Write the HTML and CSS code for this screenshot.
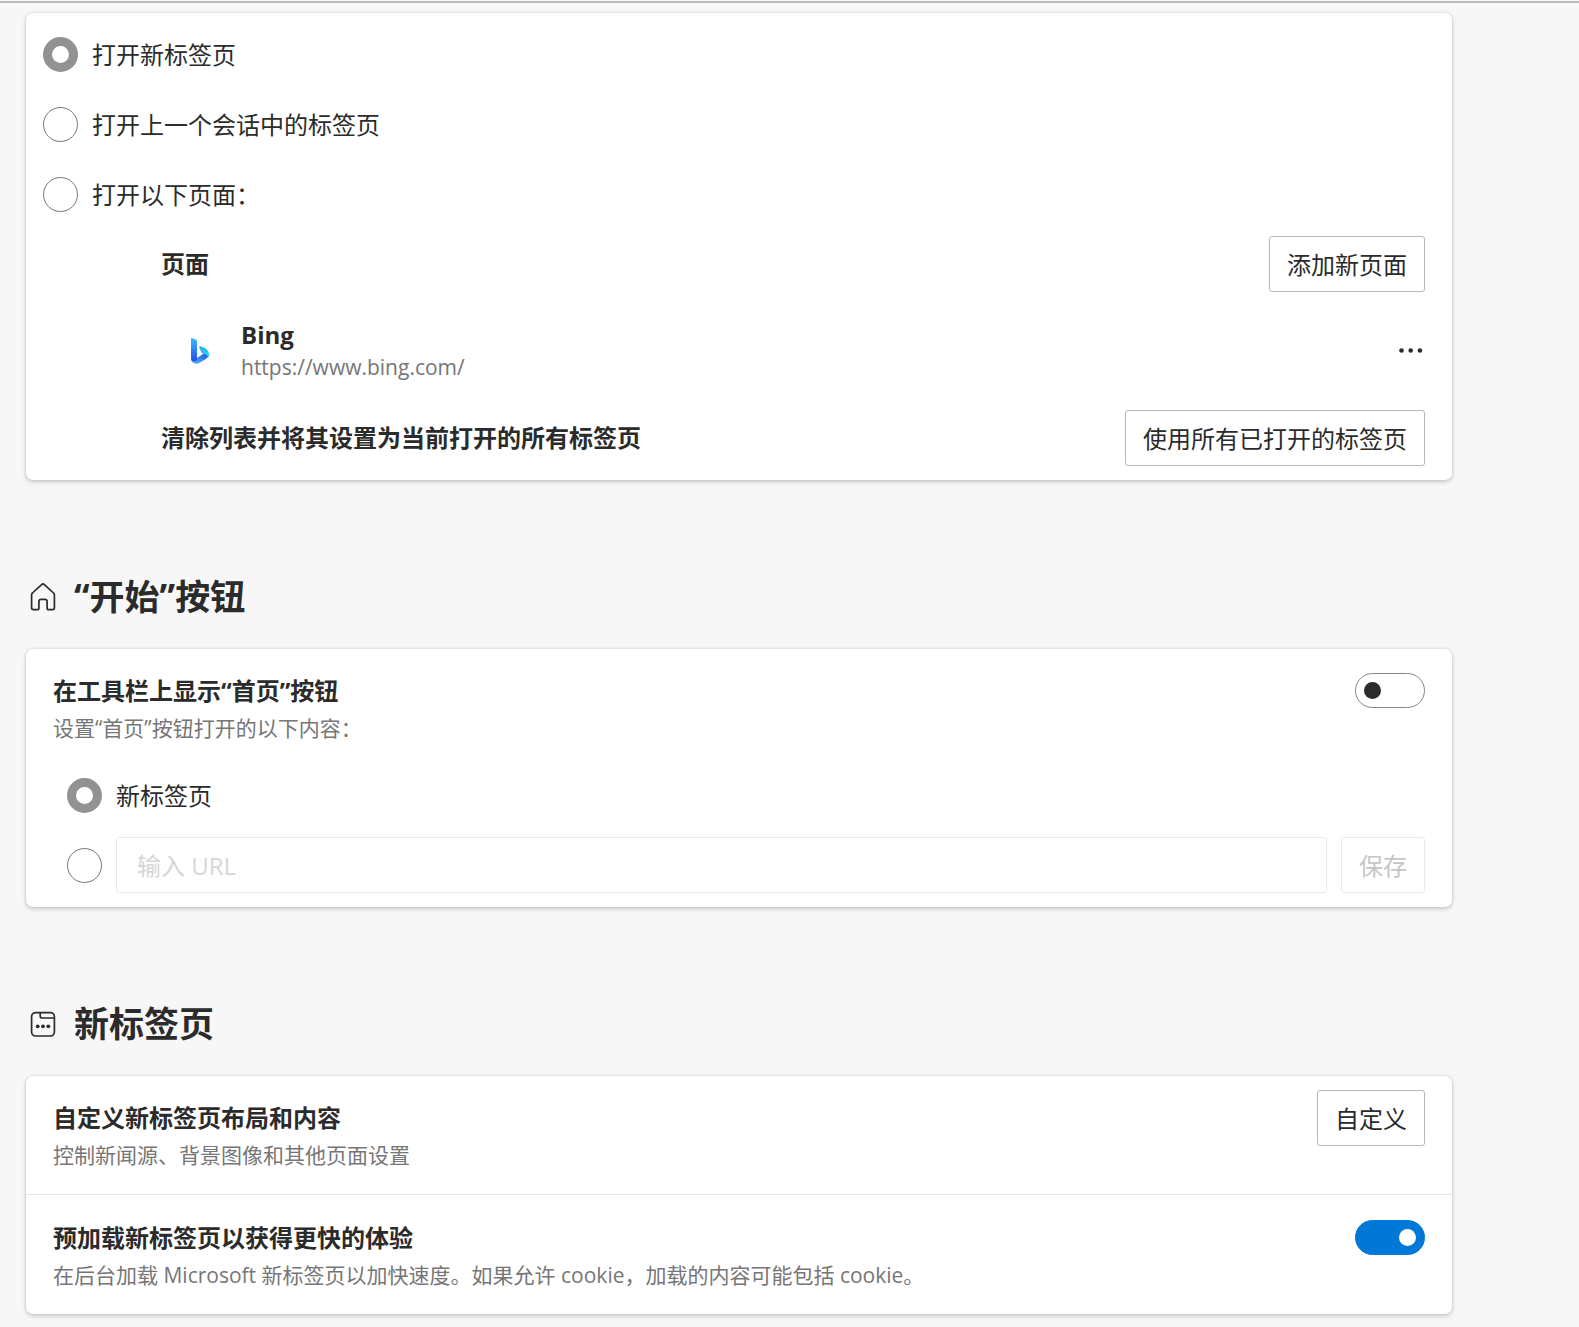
FILE: index.html
```html
<!DOCTYPE html>
<html lang="zh-CN">
<head>
    <meta charset="UTF-8">
    <meta name="viewport" content="width=device-width, initial-scale=1.0">
    <title>设置</title>
    <link rel="stylesheet" href="styles.css">
</head>
<body>

    <main>
        <section class="card startup">
            <label class="option"><input type="radio" class="radio" name="startup" checked>打开新标签页</label>
            <label class="option"><input type="radio" class="radio" name="startup">打开上一个会话中的标签页</label>
            <label class="option"><input type="radio" class="radio" name="startup">打开以下页面：</label>

            <div class="pages">
                <div class="pagesRow">
                    <h3>页面</h3>
                    <button type="button" class="btn">添加新页面</button>
                </div>
                <div class="site">
                    <svg class="siteIcon" viewBox="0 0 18 26" aria-hidden="true">
                        <defs>
                            <linearGradient id="stem" x1="0" y1="0" x2="0" y2="1">
                                <stop offset="0" stop-color="#37bdff"/>
                                <stop offset="1" stop-color="#2350e8"/>
                            </linearGradient>
                            <linearGradient id="bowl" x1="0" y1="0" x2="1" y2="1">
                                <stop offset="0" stop-color="#2fa5f5"/>
                                <stop offset="1" stop-color="#22e2d8"/>
                            </linearGradient>
                            <linearGradient id="base" x1="0" y1="1" x2="1" y2="0">
                                <stop offset="0" stop-color="#4cc3ff"/>
                                <stop offset="1" stop-color="#1b48e0"/>
                            </linearGradient>
                        </defs>
                        <path fill="url(#base)" d="M17.600 15.500c-.8-1.300-2.600-1.200-4.300-.2L5.500 20.300 0 20.500c0 3 2.400 5.200 5.200 5.200 1.300 0 2.300-.3 3.300-.9l6.300-3.800c2-1.200 3.200-3.200 2.800-5.500z"/>
                        <path fill="url(#bowl)" d="M9.400 8.200c-1-.1-1.400.6-1.100 1.400l1.900 4.600c.2.5.5.8 1 1l3.200 1.300c1.800.8 2.900 1.800 2.900 3.300.5-1 .7-2 .7-3.200 0-2.900-1.500-5.200-3.900-6.500z"/>
                        <path fill="url(#stem)" d="M.9.1 4.700 1.500c.8.3 1.300 1 1.300 1.900v18.100c-.2 1.200-1.300 1.900-2.700 1.900C1.400 23.400 0 22.200 0 20.400V.7C0 .2.400-.1.900.1z"/>
                    </svg>
                    <div class="siteText">
                        <h3>Bing</h3>
                        <p>https://www.bing.com/</p>
                    </div>
                    <button type="button" class="more" aria-label="更多操作">
                        <svg viewBox="0 0 24 24" fill="currentColor" aria-hidden="true">
                            <circle cx="2.500" cy="11.500" r="2.300"/>
                            <circle cx="11.700" cy="11.500" r="2.300"/>
                            <circle cx="20.900" cy="11.500" r="2.300"/>
                        </svg>
                    </button>
                </div>
                <div class="pagesRow">
                    <h3>清除列表并将其设置为当前打开的所有标签页</h3>
                    <button type="button" class="btn">使用所有已打开的标签页</button>
                </div>
            </div>
        </section>

        <h2>
            <svg viewBox="0 0 26 28" fill="none" stroke="currentColor" stroke-width="1.700" stroke-linejoin="round" aria-hidden="true">
                <path d="M11.600 1.600 2.500 10c-.6.500-.9 1.200-.9 2v12.800c0 1.100.7 1.800 1.800 1.800h3.900c1 0 1.600-.7 1.600-1.700v-6.400c0-1.300.9-2.200 2.200-2.200h3.800c1.300 0 2.200.9 2.200 2.200v6.400c0 1 .6 1.700 1.600 1.700h3.900c1.100 0 1.800-.7 1.800-1.800V12c0-.8-.3-1.500-.9-2l-9.100-8.400c-.8-.7-2-.7-2.800 0z"/>
            </svg>
            “开始”按钮
        </h2>
        <section class="card">
            <div class="row">
                <div class="rowText">
                    <h3><label for="showHome">在工具栏上显示“首页”按钮</label></h3>
                    <p>设置“首页”按钮打开的以下内容：</p>
                </div>
                <input type="checkbox" class="toggle" id="showHome">
            </div>
            <div class="homeOptions">
                <label class="homeOption"><input type="radio" class="radio" name="home" checked>新标签页</label>
                <div class="homeOption">
                    <input type="radio" class="radio" name="home" aria-label="输入 URL">
                    <input type="text" class="url" placeholder="输入 URL" aria-label="URL" disabled>
                    <button type="button" class="btn" disabled>保存</button>
                </div>
            </div>
        </section>

        <h2>
            <svg viewBox="0 0 26 28" fill="none" stroke="currentColor" stroke-width="1.700" aria-hidden="true">
                <rect x="1.600" y="2.600" width="22.800" height="23.400" rx="4"/>
                <path d="M10.200 2.600v3.300c0 1.300.8 2.100 2.100 2.100h12"/>
                <g fill="currentColor" stroke="none">
                    <circle cx="7.700" cy="16.300" r="1.900"/>
                    <circle cx="13" cy="16.300" r="1.900"/>
                    <circle cx="18.300" cy="16.300" r="1.900"/>
                </g>
            </svg>
            新标签页
        </h2>
        <section class="card">
            <div class="row">
                <div class="rowText">
                    <h3>自定义新标签页布局和内容</h3>
                    <p>控制新闻源、背景图像和其他页面设置</p>
                </div>
                <button type="button" class="btn">自定义</button>
            </div>
            <div class="row">
                <div class="rowText">
                    <h3><label for="preload">预加载新标签页以获得更快的体验</label></h3>
                    <p>在后台加载 Microsoft 新标签页以加快速度。如果允许 cookie，加载的内容可能包括 cookie。</p>
                </div>
                <input type="checkbox" class="toggle" id="preload" checked>
            </div>
        </section>
    </main>

</body>
</html>
```

FILE: styles.css
```css
* {
    box-sizing: border-box;
}
body {
    margin: 0;
    padding-top: 1px;
    background-color: #f7f7f7;
    color: #2b2b2b;
    font-family: "Open Sans", "Noto Sans CJK SC", sans-serif;
    font-size: 24px;
    line-height: 35px;
}
main {
    border-top: 2px solid #bbbdbc;
    padding: 10px 127px 13px 26px;
}
h2, h3, p {
    margin: 0;
}
h2 {
    display: flex;
    align-items: center;
    gap: 18px;
    margin: 93px 0 28px;
    padding-left: 4px;
    font-size: 35px;
    line-height: 48px;
}
h2 svg {
    width: 26px;
    height: 28px;
}
h3 {
    font-size: 24px;
    line-height: 35px;
    font-weight: bold;
}
p {
    color: #767676;
    font-size: 21px;
    line-height: 40px;
}
.card {
    background-color: #fff;
    border-radius: 7px;
    box-shadow: 0 2px 5px rgba(0, 0, 0, 0.18), 0 0 3px rgba(0, 0, 0, 0.12);
}
.startup {
    padding: 6px 27px 14px 17px;
}
.option {
    display: flex;
    align-items: center;
    gap: 14px;
    height: 70px;
}
.radio {
    appearance: none;
    flex: none;
    width: 35px;
    height: 35px;
    margin: 0;
    border: 1px solid #767676;
    border-radius: 50%;
    background-color: #fff;
}
.radio:checked {
    border: 9px solid #929292;
}
.pages {
    padding: 7px 0 0 118px;
}
.pagesRow {
    display: flex;
    align-items: center;
    justify-content: space-between;
}
.pagesRow h3 {
    padding-bottom: 2px;
}
.site {
    display: flex;
    align-items: center;
    height: 118px;
    padding-left: 30px;
}
.siteIcon {
    width: 18px;
    height: 26px;
    margin-right: 32px;
}
.siteText {
    flex: 1;
}
.siteText h3, .siteText p {
    line-height: 32px;
}
.more {
    display: flex;
    padding: 0 2px;
    border: none;
    background: none;
    color: #2b2b2b;
}
.more svg {
    width: 24px;
    height: 24px;
}
.btn {
    flex: none;
    height: 56px;
    padding: 0 17px;
    border: 1px solid #b8b8b8;
    border-radius: 3px;
    background-color: #fff;
    color: #2b2b2b;
    font: inherit;
}
.btn:disabled {
    border-color: #eaeaea;
    color: #c6c6c6;
}
.row {
    display: flex;
    align-items: flex-start;
    justify-content: space-between;
    padding: 14px 27px 19px;
}
.row + .row {
    border-top: 1px solid #e5e5e5;
    padding-top: 15px;
}
.rowText {
    padding-top: 10px;
}
.toggle {
    appearance: none;
    display: flex;
    align-items: center;
    flex: none;
    width: 70px;
    height: 35px;
    margin: 10px 0 0;
    padding: 0 8px;
    border: 1px solid #868686;
    border-radius: 18px;
    background-color: #fff;
}
.toggle::before {
    content: "";
    width: 17px;
    height: 17px;
    border-radius: 50%;
    background-color: #2b2b2b;
}
.toggle:checked {
    justify-content: flex-end;
    border-color: #0078d7;
    background-color: #0078d7;
}
.toggle:checked::before {
    background-color: #fff;
}
.homeOptions {
    display: grid;
    gap: 14px;
    padding: 0 27px 14px 41px;
}
.homeOption {
    display: flex;
    align-items: center;
    gap: 14px;
    height: 56px;
}
.url {
    flex: 1;
    min-width: 0;
    height: 56px;
    padding: 0 20px;
    border: 1px solid #eaeaea;
    border-radius: 3px;
    background-color: #fff;
    font: inherit;
}
.url::placeholder {
    color: #d6d6d6;
}
```
